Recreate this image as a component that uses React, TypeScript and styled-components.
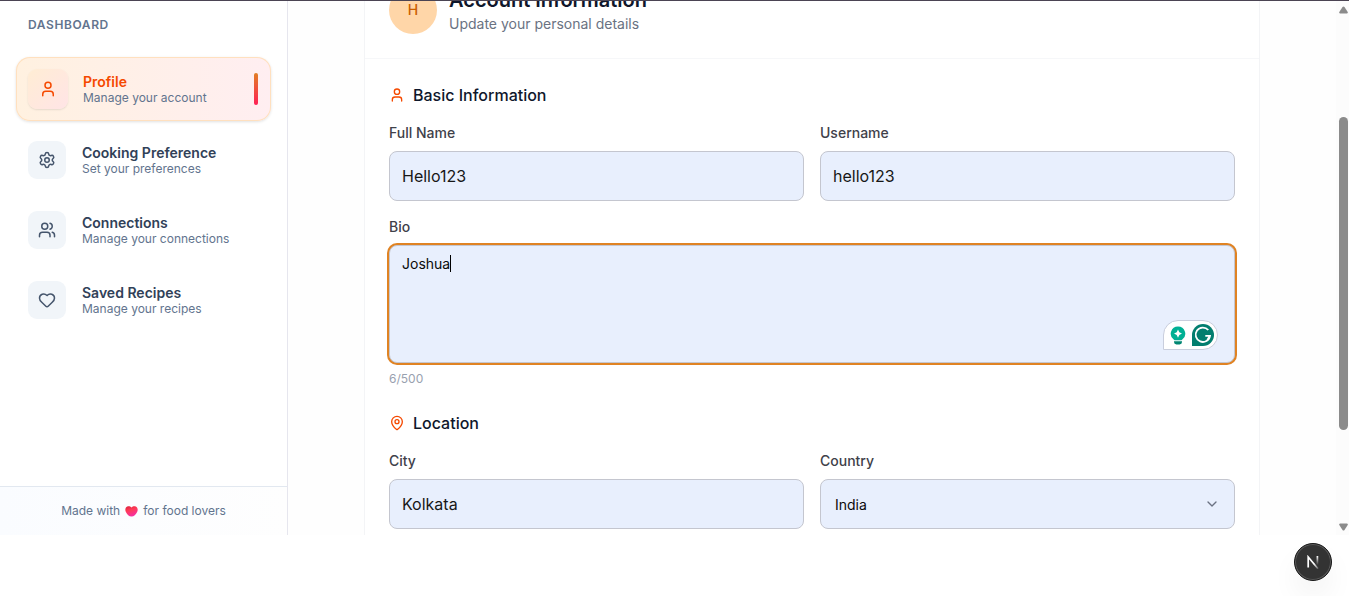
import React, { useState } from "react";
import styled, { createGlobalStyle, css } from "styled-components";
import { User, Settings, Users, Heart, MapPin, ChevronDown } from "lucide-react";

const GlobalStyle = createGlobalStyle`
  *, *::before, *::after { box-sizing: border-box; }
  body {
    margin: 0;
    background: #fff;
    color: #0f172b;
    font-family: Inter, "Liberation Sans", sans-serif;
    font-size: 14px;
    line-height: 20px;
  }
  h1, h2, p, ul { margin: 0; padding: 0; }
  ul { list-style: none; }
  input, textarea, select, button { font-family: inherit; }
`;

const Shell = styled.div`
  display: flex;
  height: calc(100vh - 61px);
  border-top: 1px solid #4b4453;
  overflow: hidden;
`;

const Sidebar = styled.aside`
  display: flex;
  flex-direction: column;
  flex: 0 0 288px;
  border-right: 1px solid #e6e6ee;
`;

const SidebarTitle = styled.h2`
  padding: 16px 28px 24px;
  color: #62748e;
  font-size: 12px;
  line-height: 16px;
  font-weight: 600;
  letter-spacing: 0.05em;
  text-transform: uppercase;
`;

const NavList = styled.ul`
  display: flex;
  flex-direction: column;
  flex: 1;
  gap: 8px;
  padding: 0 16px;
`;

const NavLink = styled.a<{ $active: boolean }>`
  display: flex;
  align-items: center;
  gap: 16px;
  height: 62px;
  padding: 0 12px;
  border-radius: 14px;
  color: #314158;
  text-decoration: none;
  ${(p) =>
    p.$active &&
    css`
      gap: 15px;
      height: 64px;
      padding-right: 13px;
      color: #f54900;
      background: linear-gradient(90deg, #fff1e0, #ffeef1);
      box-shadow: inset 0 0 0 1px #ffe0bf, 0 1px 3px rgba(0, 0, 0, 0.12);
    `}
`;

const NavIcon = styled.span<{ $active: boolean }>`
  display: grid;
  place-items: center;
  width: 38px;
  height: 38px;
  border-radius: 9px;
  color: #45556c;
  background: #f1f5f9;
  ${(p) =>
    p.$active &&
    css`
      width: 40px;
      height: 40px;
      color: #f54900;
      background: linear-gradient(135deg, #ffedd4, #ffe4e6);
      box-shadow: 0 1px 2px rgba(0, 0, 0, 0.1);
    `}
`;

const NavText = styled.span`
  display: flex;
  flex: 1;
  flex-direction: column;
  padding-top: 2px;
  font-size: 14px;
  line-height: 16px;
  font-weight: 600;
`;

const NavHint = styled.span`
  color: #62748e;
  font-size: 12px;
  line-height: 16px;
  font-weight: 400;
`;

const ActiveBar = styled.span`
  width: 4px;
  height: 32px;
  border-radius: 2px;
  background: linear-gradient(#e17f24, #ff2056);
`;

const SidebarFooter = styled.footer`
  display: flex;
  align-items: center;
  justify-content: center;
  gap: 5px;
  padding: 16px;
  border-top: 1px solid #e2e8f0;
  background: linear-gradient(90deg, #fafcff, #fefefe);
  color: #62748e;
  font-size: 12px;
  line-height: 16px;
`;

const Main = styled.main`
  flex: 1;
  min-width: 0;
  overflow: hidden;
  background: #fefefe;
`;

const Card = styled.section`
  max-width: 896px;
  margin: -40px auto 0;
  border: 1px solid #f3f4f6;
  background: #fff;
`;

const CardHeader = styled.header`
  display: flex;
  gap: 12px;
  padding: 24px;
  border-bottom: 1px solid #f6f7f9;
`;

const Avatar = styled.div`
  display: grid;
  place-items: center;
  width: 48px;
  height: 48px;
  border-radius: 50%;
  background: #ffd6a8;
  color: #ca5f00;
  font-weight: 500;
`;

const CardTitle = styled.h1`
  font-size: 20px;
  line-height: 28px;
  font-weight: 600;
`;

const CardSubtitle = styled.p`
  color: #6a7282;
`;

const Form = styled.form`
  display: flex;
  flex-direction: column;
  gap: 24px;
  padding: 24px;
`;

const FormSection = styled.div`
  display: flex;
  flex-direction: column;
  gap: 16px;
`;

const SectionTitle = styled.h2`
  display: flex;
  align-items: center;
  gap: 8px;
  font-size: 16px;
  line-height: 24px;
  font-weight: 500;
  svg { color: #f54900; }
`;

const FieldRow = styled.div`
  display: grid;
  grid-template-columns: 1fr 1fr;
  gap: 16px;
`;

const Field = styled.div`
  display: flex;
  flex-direction: column;
  gap: 8px;
`;

const Label = styled.label`
  color: #3f414a;
  font-weight: 500;
`;

const control = css`
  display: block;
  width: 100%;
  border: 1px solid #c4c6cf;
  border-radius: 8px;
  background: #e8effd;
  color: #171717;
  outline: none;
`;

const TextInput = styled.input`
  ${control}
  height: 50px;
  padding: 0 12px;
  font-size: 16px;
`;

const ControlWrap = styled.div`
  position: relative;
`;

const TextArea = styled.textarea`
  ${control}
  height: 118px;
  padding: 8px 12px;
  color: #0a0a0a;
  font-size: 14px;
  line-height: 20px;
  resize: none;
  caret-color: transparent;
  box-shadow: 0 0 0 2px #e08323;
`;

const Caret = styled.span`
  position: absolute;
  top: 10px;
  left: 61px;
  width: 1px;
  height: 17px;
  background: #000;
`;

const Assistant = styled.div`
  position: absolute;
  right: 17px;
  bottom: 13px;
  display: flex;
  align-items: center;
  gap: 6px;
  height: 30px;
  padding: 0 3px 0 6px;
  border: 1px solid #c9cedd;
  border-radius: 15px 15px 15px 0;
  background: #fff;
`;

const Counter = styled.p`
  color: #99a1af;
  font-size: 12px;
  line-height: 16px;
`;

const Select = styled.select`
  ${control}
  height: 50px;
  padding: 0 40px 0 14px;
  color: #0a0a0a;
  font-size: 14px;
  appearance: none;
`;

const SelectArrow = styled(ChevronDown)`
  position: absolute;
  top: 17px;
  right: 15px;
  color: #6a7282;
  pointer-events: none;
`;

const ScrollTrack = styled.div`
  display: flex;
  flex-direction: column;
  align-items: flex-end;
  flex: 0 0 13px;
  padding: 5px 1px 4px 0;
  background: #fcfcfc;
`;

const ScrollRoom = styled.div<{ $grow: number }>`
  flex: ${(p) => p.$grow} 0 0;
`;

const ScrollThumb = styled.div`
  flex: 312 0 0;
  width: 9px;
  border-radius: 5px;
  background: #8b8b8b;
`;

const DevBadge = styled.button`
  position: fixed;
  right: 17px;
  bottom: 15px;
  display: grid;
  place-items: center;
  width: 38px;
  height: 38px;
  padding: 0;
  border: 1px solid #171717;
  border-radius: 50%;
  background: #333;
  box-shadow: inset 0 0 0 1px #5a5a5a, 0 16px 32px -8px rgba(0, 0, 0, 0.14);
`;

const navItems = [
  { title: "Profile", hint: "Manage your account", Icon: User },
  { title: "Cooking Preference", hint: "Set your preferences", Icon: Settings },
  { title: "Connections", hint: "Manage your connections", Icon: Users },
  { title: "Saved Recipes", hint: "Manage your recipes", Icon: Heart },
];

const HeartEmoji = () => (
  <svg width="13" height="11" viewBox="0 0 13 11" role="img" aria-label="love">
    <defs>
      <linearGradient id="heart" x1="0" y1="0" x2="0.4" y2="1">
        <stop offset="0" stopColor="#d81f3c" />
        <stop offset="0.45" stopColor="#ff3b56" />
        <stop offset="1" stopColor="#f62fa0" />
      </linearGradient>
    </defs>
    <path d="M6.500 1.500C7.600.2 9.300 0 10.700.5c2 .9 2.500 3.300 1.400 5.500C10.900 8.400 9 10.500 6.500 10.500S2.100 8.400.9 6C-.2 3.800.3 1.400 2.300.5 3.700 0 5.400.2 6.500 1.500Z" fill="url(#heart)" />
  </svg>
);

const BulbIcon = () => (
  <svg width="16" height="19" viewBox="0 0 16 19">
    <path d="M8 .5a7.200 7.200 0 0 0-4.300 13l.9.700h6.800l.9-.7A7.200 7.200 0 0 0 8 .5Z" fill="#00b094" />
    <path d="M8 3.500 9.300 6.300 12 7.600 9.300 8.900 8 11.700 6.700 8.900 4 7.600l2.700-1.300Z" fill="#fff" />
    <path d="M4 15.200h8v.8a2.500 2.500 0 0 1-2.400 2.400H6.400A2.500 2.500 0 0 1 4 16Z" fill="#008672" />
  </svg>
);

const GrammarIcon = () => (
  <svg width="22" height="22" viewBox="0 0 22 22">
    <path d="M11 0a11 11 0 1 1 0 22H0V11A11 11 0 0 1 11 0Z" fill="#027e6f" />
    <path d="M16.300 6A7.200 7.200 0 1 0 18 11.800h-4.700M15.600 15.600 18 11.800" fill="none" stroke="#fff" strokeWidth="1.800" />
  </svg>
);

const NextMark = () => (
  <svg width="14" height="14" viewBox="0 0 14 14" fill="none">
    <defs>
      <linearGradient id="diag" x1="6" y1="7" x2="12" y2="14" gradientUnits="userSpaceOnUse">
        <stop offset="0.3" stopColor="#fff" />
        <stop offset="1" stopColor="#fff" stopOpacity="0.2" />
      </linearGradient>
      <linearGradient id="stem" x1="0" y1="1" x2="0" y2="10" gradientUnits="userSpaceOnUse">
        <stop stopColor="#fff" />
        <stop offset="1" stopColor="#fff" stopOpacity="0" />
      </linearGradient>
    </defs>
    <path d="M2.200 12.500V2L12 13.700" stroke="url(#diag)" strokeWidth="1.700" />
    <path d="M11.400 1v9" stroke="url(#stem)" strokeWidth="1.700" />
  </svg>
);

const Arrow = ({ down }: { down?: boolean }) => (
  <svg width="9" height="8" viewBox="0 0 9 8">
    <path d={down ? "M1 .5h7q1.300.5.7 1.500L5.500 7q-1 1-2 0L.3 2Q-.3 1 1 .5Z" : "M1 7.500h7q1.300-.5.7-1.500L5.500 1q-1-1-2 0L.3 6Q-.3 7 1 7.500Z"} fill="#8b8b8b" />
  </svg>
);

export default function App() {
  const [bio, setBio] = useState("Joshua");

  return (
    <>
      <GlobalStyle />
      <Shell>
        <Sidebar>
          <SidebarTitle>Dashboard</SidebarTitle>
          <NavList>
            {navItems.map(({ title, hint, Icon }, i) => (
              <li key={title}>
                <NavLink href="#" $active={i === 0}>
                  <NavIcon $active={i === 0}>
                    <Icon size={18} />
                  </NavIcon>
                  <NavText>
                    {title}
                    <NavHint>{hint}</NavHint>
                  </NavText>
                  {i === 0 && <ActiveBar />}
                </NavLink>
              </li>
            ))}
          </NavList>
          <SidebarFooter>
            <span>Made with</span>
            <HeartEmoji />
            <span>for food lovers</span>
          </SidebarFooter>
        </Sidebar>

        <Main>
          <Card>
            <CardHeader>
              <Avatar>H</Avatar>
              <div>
                <CardTitle>Account Information</CardTitle>
                <CardSubtitle>Update your personal details</CardSubtitle>
              </div>
            </CardHeader>
            <Form>
              <FormSection>
                <SectionTitle>
                  <User size={16} />
                  Basic Information
                </SectionTitle>
                <FieldRow>
                  <Field>
                    <Label htmlFor="name">Full Name</Label>
                    <TextInput id="name" defaultValue="Hello123" />
                  </Field>
                  <Field>
                    <Label htmlFor="username">Username</Label>
                    <TextInput id="username" defaultValue="hello123" />
                  </Field>
                </FieldRow>
                <Field>
                  <Label htmlFor="bio">Bio</Label>
                  <ControlWrap>
                    <TextArea id="bio" maxLength={500} value={bio} onChange={(e) => setBio(e.target.value)} />
                    <Caret />
                    <Assistant>
                      <BulbIcon />
                      <GrammarIcon />
                    </Assistant>
                  </ControlWrap>
                  <Counter>{bio.length}/500</Counter>
                </Field>
              </FormSection>
              <FormSection>
                <SectionTitle>
                  <MapPin size={16} />
                  Location
                </SectionTitle>
                <FieldRow>
                  <Field>
                    <Label htmlFor="city">City</Label>
                    <TextInput id="city" defaultValue="Kolkata" />
                  </Field>
                  <Field>
                    <Label htmlFor="country">Country</Label>
                    <ControlWrap>
                      <Select id="country" defaultValue="India">
                        <option>India</option>
                      </Select>
                      <SelectArrow size={16} />
                    </ControlWrap>
                  </Field>
                </FieldRow>
              </FormSection>
            </Form>
          </Card>
        </Main>

        <ScrollTrack aria-hidden="true">
          <Arrow />
          <ScrollRoom $grow={103} />
          <ScrollThumb />
          <ScrollRoom $grow={93} />
          <Arrow down />
        </ScrollTrack>
      </Shell>
      <DevBadge type="button" aria-label="Open developer tools">
        <NextMark />
      </DevBadge>
    </>
  );
}
